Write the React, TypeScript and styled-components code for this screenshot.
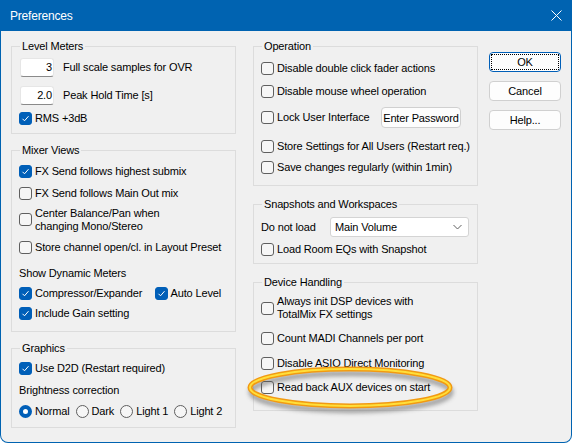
import styled, { createGlobalStyle } from "styled-components";

const GlobalStyle = createGlobalStyle`
  html, body { margin: 0; padding: 0; background: #ffffff; }
  body {
    font-family: "Liberation Sans", Arial, sans-serif;
    font-size: 11px;
    letter-spacing: -0.15px;
    color: #000;
  }
  * { box-sizing: border-box; }
`;

const Window = styled.div`
  position: relative;
  width: 572px;
  height: 443px;
  background: #0063b1;
  border-radius: 0 0 8px 8px;
  display: flex;
  flex-direction: column;
  overflow: hidden;
`;

const TitleBar = styled.div`
  height: 31px;
  display: flex;
  align-items: center;
  padding-left: 10px;
  color: #fff;
`;

const Title = styled.div`
  flex: 1;
  font-size: 12px;
  letter-spacing: -0.2px;
`;

const CloseBtn = styled.div`
  width: 32px;
  height: 31px;
  display: flex;
  align-items: center;
  justify-content: center;
`;

const Body = styled.div`
  flex: 1;
  margin: 0 1px 1px 1px;
  background: #f0f0f0;
  border-radius: 0 0 7px 7px;
  display: flex;
  padding: 9px 10px 0 10px;
`;

const Column = styled.div<{ $gap: number; $ml?: number }>`
  width: 225px;
  display: flex;
  flex-direction: column;
  gap: ${(p) => p.$gap}px;
  margin-left: ${(p) => p.$ml ?? 0}px;
`;

const Group = styled.fieldset<{ $h: number }>`
  margin: 0;
  min-width: 0;
  height: ${(p) => p.$h}px;
  padding: 0 8px 0 7px;
  border: 1px solid #dcdcdc;
  display: flex;
  flex-direction: column;
`;

const Legend = styled.legend`
  padding: 0 2px;
  margin-left: 1px;
  line-height: 13px;
`;

const Row = styled.div<{ $h?: number; $mt?: number }>`
  display: flex;
  align-items: center;
  height: ${(p) => p.$h ?? 20}px;
  margin-top: ${(p) => p.$mt ?? 0}px;
`;

const Item = styled.div<{ $w?: number }>`
  display: flex;
  align-items: center;
  width: ${(p) => (p.$w ? `${p.$w}px` : "auto")};
  margin-right: 6px;
`;

const Box = styled.span<{ $on?: boolean }>`
  flex: none;
  width: 13px;
  height: 13px;
  border-radius: 3px;
  border: 1px solid ${(p) => (p.$on ? "#005fb8" : "#5f5f5f")};
  background: ${(p) => (p.$on ? "#005fb8" : "#f6f6f6")};
  display: flex;
  align-items: center;
  justify-content: center;
`;

const Dot = styled.span<{ $on?: boolean }>`
  flex: none;
  width: 13px;
  height: 13px;
  border-radius: 50%;
  border: ${(p) => (p.$on ? "4px solid #005fb8" : "1px solid #5f5f5f")};
  background: ${(p) => (p.$on ? "#ffffff" : "#f6f6f6")};
`;

const Label = styled.span`
  margin-left: 3px;
  line-height: 13px;
  white-space: nowrap;
`;

const Text = styled.span`
  white-space: nowrap;
`;

const NumBox = styled.div`
  width: 34px;
  height: 19px;
  margin: 0 9px 0 1px;
  background: #fff;
  border: 1px solid #e6e6e6;
  border-bottom-color: #8a8a8a;
  border-radius: 3px;
  text-align: right;
  padding-right: 1px;
  line-height: 17px;
`;

const Select = styled.div`
  width: 139px;
  height: 20px;
  margin-left: auto;
  background: #fff;
  border: 1px solid #d4d4d4;
  border-radius: 3px;
  display: flex;
  align-items: center;
  justify-content: space-between;
  padding: 0 6px 0 4px;
`;

const SmallButton = styled.div`
  width: 80px;
  height: 21px;
  margin: 0 8px 0 auto;
  background: #fdfdfd;
  border: 1px solid #d0d0d0;
  border-radius: 4px;
  display: flex;
  align-items: center;
  justify-content: center;
`;

const ButtonStack = styled.div`
  width: 72px;
  margin: 12px 0 0 11px;
  display: flex;
  flex-direction: column;
  gap: 9px;
`;

const PushButton = styled.div<{ $default?: boolean }>`
  height: 20px;
  background: #fdfdfd;
  border: 1px solid ${(p) => (p.$default ? "#005fb8" : "#d0d0d0")};
  border-radius: 4px;
  display: flex;
  align-items: center;
  justify-content: center;
  padding: 1px;
`;

const Focus = styled.div<{ $on?: boolean }>`
  width: 100%;
  height: 100%;
  border: 1px dotted ${(p) => (p.$on ? "#000" : "transparent")};
  display: flex;
  align-items: center;
  justify-content: center;
`;

const Highlight = styled.svg`
  position: absolute;
  left: 244px;
  top: 362px;
  pointer-events: none;
`;

function Check({ on, children, w }: { on?: boolean; children: React.ReactNode; w?: number }) {
  return (
    <Item $w={w}>
      <Box $on={on}>
        {on && (
          <svg width="9" height="9" viewBox="0 0 9 9">
            <polyline points="1.5,4.8 3.5,6.8 7.5,2.2" fill="none" stroke="#fff" strokeWidth="1" />
          </svg>
        )}
      </Box>
      <Label>{children}</Label>
    </Item>
  );
}

function Radio({ on, children }: { on?: boolean; children: React.ReactNode }) {
  return (
    <Item>
      <Dot $on={on} />
      <Label>{children}</Label>
    </Item>
  );
}

export default function App() {
  return (
    <>
      <GlobalStyle />
      <Window>
        <TitleBar>
          <Title>Preferences</Title>
          <CloseBtn>
            <svg width="11" height="11" viewBox="0 0 11 11">
              <path d="M0.5 0.5 L10.5 10.5 M10.5 0.5 L0.5 10.5" stroke="#fff" strokeWidth="1" />
            </svg>
          </CloseBtn>
        </TitleBar>
        <Body>
          <Column $gap={10}>
            <Group $h={94}>
              <Legend>Level Meters</Legend>
              <Row $mt={4}>
                <NumBox>3</NumBox>
                <Text>Full scale samples for OVR</Text>
              </Row>
              <Row $mt={8}>
                <NumBox>2.0</NumBox>
                <Text>Peak Hold Time [s]</Text>
              </Row>
              <Row $mt={3}>
                <Check on>RMS +3dB</Check>
              </Row>
            </Group>
            <Group $h={188}>
              <Legend>Mixer Views</Legend>
              <Row $mt={4}>
                <Check on>FX Send follows highest submix</Check>
              </Row>
              <Row $mt={2}>
                <Check>FX Send follows Main Out mix</Check>
              </Row>
              <Row $mt={1} $h={31}>
                <Check>
                  Center Balance/Pan when
                  <br />
                  changing Mono/Stereo
                </Check>
              </Row>
              <Row $mt={2}>
                <Check>Store channel open/cl. in Layout Preset</Check>
              </Row>
              <Row $mt={6}>
                <Text>Show Dynamic Meters</Text>
              </Row>
              <Row>
                <Check on w={138}>
                  Compressor/Expander
                </Check>
                <Check on>Auto Level</Check>
              </Row>
              <Row>
                <Check on>Include Gain setting</Check>
              </Row>
            </Group>
            <Group $h={86}>
              <Legend>Graphics</Legend>
              <Row $mt={3}>
                <Check on>Use D2D (Restart required)</Check>
              </Row>
              <Row $mt={2}>
                <Text>Brightness correction</Text>
              </Row>
              <Row $mt={1}>
                <Radio on>Normal</Radio>
                <Radio>Dark</Radio>
                <Radio>Light 1</Radio>
                <Radio>Light 2</Radio>
              </Row>
            </Group>
          </Column>

          <Column $gap={12} $ml={17}>
            <Group $h={146}>
              <Legend>Operation</Legend>
              <Row $mt={5}>
                <Check>Disable double click fader actions</Check>
              </Row>
              <Row $mt={3}>
                <Check>Disable mouse wheel operation</Check>
              </Row>
              <Row $mt={6} $h={21}>
                <Item>
                  <Box />
                  <Label>Lock User Interface</Label>
                </Item>
                <SmallButton>Enter Password</SmallButton>
              </Row>
              <Row $mt={8}>
                <Check>Store Settings for All Users (Restart req.)</Check>
              </Row>
              <Row $mt={1}>
                <Check>Save changes regularly (within 1min)</Check>
              </Row>
            </Group>
            <Group $h={66}>
              <Legend>Snapshots and Workspaces</Legend>
              <Row $mt={5} $h={21}>
                <Text>Do not load</Text>
                <Select>
                  <Text>Main Volume</Text>
                  <svg width="9" height="6" viewBox="0 0 9 6">
                    <polyline points="0.5,1 4.5,5 8.5,1" fill="none" stroke="#606060" strokeWidth="1" />
                  </svg>
                </Select>
              </Row>
              <Row $mt={2}>
                <Check>Load Room EQs with Snapshot</Check>
              </Row>
            </Group>
            <Group $h={135}>
              <Legend>Device Handling</Legend>
              <Row $mt={6} $h={26}>
                <Check>
                  Always init DSP devices with
                  <br />
                  TotalMix FX settings
                </Check>
              </Row>
              <Row $mt={7}>
                <Check>Count MADI Channels per port</Check>
              </Row>
              <Row $mt={5}>
                <Check>Disable ASIO Direct Monitoring</Check>
              </Row>
              <Row $mt={4}>
                <Check>Read back AUX devices on start</Check>
              </Row>
            </Group>
          </Column>

          <ButtonStack>
            <PushButton $default>
              <Focus $on>OK</Focus>
            </PushButton>
            <PushButton>
              <Focus>Cancel</Focus>
            </PushButton>
            <PushButton>
              <Focus>Help...</Focus>
            </PushButton>
          </ButtonStack>
        </Body>

        <Highlight width="214" height="56" viewBox="0 0 214 56">
          <defs>
            <filter id="blur" x="-10%" y="-30%" width="120%" height="160%">
              <feGaussianBlur stdDeviation="2.2" />
            </filter>
          </defs>
          <ellipse cx="107" cy="30" rx="100" ry="18.5" fill="none" stroke="#5a5a5a" strokeWidth="5" opacity="0.55" filter="url(#blur)" />
          <ellipse cx="106" cy="25.5" rx="100" ry="18.5" fill="none" stroke="#f29a12" strokeWidth="5" />
          <ellipse cx="106" cy="25.5" rx="100" ry="18.5" fill="none" stroke="#ffdf3a" strokeWidth="2" />
        </Highlight>
      </Window>
    </>
  );
}
